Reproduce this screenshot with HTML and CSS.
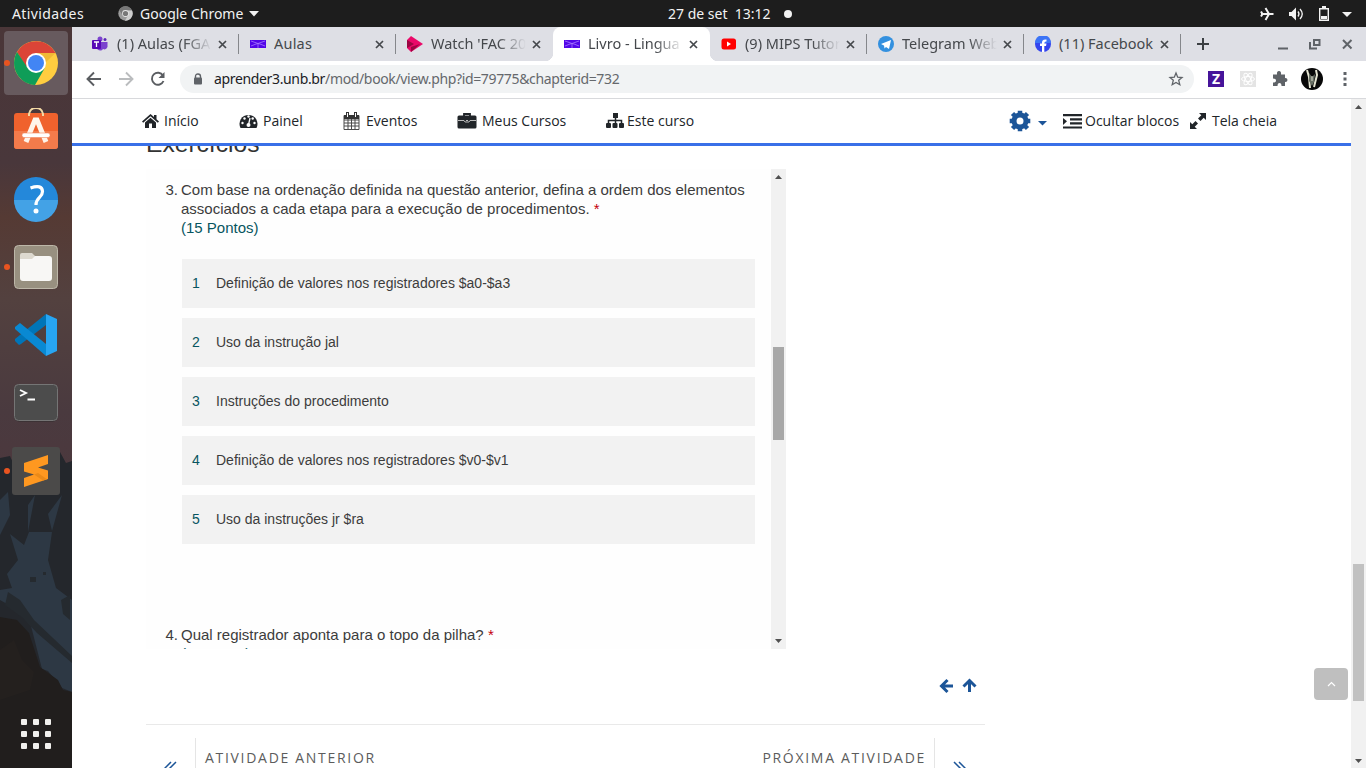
FILE: index.html
```html
<!DOCTYPE html>
<html lang="pt-BR">
<head>
<meta charset="utf-8">
<title>Livro - Linguagem</title>
<link rel="stylesheet" href="styles.css">
</head>
<body>
<header class="topbar">
  <span class="activities">Atividades</span>
  <svg class="app-icon" width="15" height="15" viewBox="0 0 15 15"><circle cx="7.5" cy="7.5" r="7.2" fill="#9b9b9b"/><path d="M1.2 4A7.2 7.2 0 0 1 14 4.500H7.500L4.500 9Z" fill="#777"/><path d="M14 4.500A7.200 7.200 0 0 1 7 14.700L10 9.500 9.500 4.500Z" fill="#ccc"/><circle cx="7.500" cy="7.500" r="3.400" fill="#e5e5e5"/><circle cx="7.500" cy="7.500" r="2.600" fill="#777"/></svg>
  <span class="app-name">Google Chrome</span>
  <svg class="caret" width="10" height="6"><path d="M0 0H10L5 5.500Z" fill="#f2f2f2"/></svg>
  <span class="clock">27 de set&nbsp; 13:12</span>
  <span class="dot"></span>
  <svg class="tray" width="94" height="18" viewBox="0 0 94 18" fill="none" stroke="#f2f2f2"><path d="M2 9H14.500M6.500 3 10 9 6.500 15M2 6.500 3.500 9 2 11.500" stroke-width="2"/><path d="M30 7H32.500L37 2.500V15.500L32.500 11H30Z" fill="#f2f2f2" stroke="none"/><path d="M39 6.500Q41 9 39 11.500M41 4Q45.500 9 41 14" stroke-width="1.300"/><path d="M60.700 3.700H69.300V15.300H60.700Z" stroke-width="1.400"/><path d="M63 1H67V3H63ZM62 11H68V14H62Z" fill="#f2f2f2" stroke="none"/><path d="M83 7H93L88 12Z" fill="#f2f2f2" stroke="none"/></svg>
</header>
<div class="desktop">
<aside class="dock">
  <svg class="wall" width="72" height="741" viewBox="0 27 72 741" preserveAspectRatio="none">
    <defs><linearGradient id="sky" x1="0" y1="0" x2="0" y2="1"><stop offset="0" stop-color="#4a3638"/><stop offset=".3" stop-color="#49373b"/><stop offset=".42" stop-color="#553a34"/><stop offset=".6" stop-color="#53413f"/><stop offset=".85" stop-color="#4a3a3f"/><stop offset="1" stop-color="#4c383d"/></linearGradient></defs>
    <path d="M0 27H72V480H0Z" fill="url(#sky)"/>
    <path d="M0 458 10 456 14 465 28 458 42 462 60 452 66 463 72 461V768H0Z" fill="#24272c"/>
    <path d="M0 500 8 492 10 515 0 535ZM28 505 35 495 28 532ZM48 514 62 495 52 531ZM10 534 24 545 29 532 52 532 48 560 56 588 72 600V692L62 688 48 671 42 669 31 626 16 609 0 600 0 590 12 588 7 574 18 560Z" fill="#2d3844"/>
    <path d="M8 592 20 600 34 620 72 656V663L37 633 23 618 5 605ZM61 600 70 595V620L63 614ZM30 577H36V582H30ZM43 572H46V575H43Z" fill="#252a2f"/>
    <path d="M0 617 17 620 29 633 40 667 58 680 63 690 72 692V768H0Z" fill="#211e1d"/>
    <path d="M0 650 14 640 22 660 34 672 30 690 0 700Z" fill="#272120" opacity=".6"/>
  </svg>
  <div class="item current running"><svg width="46" height="46" viewBox="0 0 46 46"><circle cx="23" cy="23" r="22" fill="#ffcd40"/><path d="M4 12A22 22 0 0 1 42.500 13H23L13.500 28Z" fill="#db4437"/><path d="M4 12A22 22 0 0 0 22 45L31.500 28.500 14 27Z" fill="#0f9d58"/><path d="M23 13H42.500L33 22Z" fill="#e2a52c" opacity=".5"/><circle cx="23" cy="23" r="10" fill="#fff"/><circle cx="23" cy="23" r="8" fill="#4285f4"/></svg></div>
  <div class="item"><svg width="46" height="46" viewBox="0 0 46 46"><rect x="1" y="5" width="44" height="36" rx="3" fill="#f0622d"/><path d="M1 23H45V38A3 3 0 0 1 42 41H4A3 3 0 0 1 1 38Z" fill="#f37b4b"/><path d="M16 8V6Q17 0 23 0 29 0 30 6V8" fill="none" stroke="#f3d9a4" stroke-width="2"/><path d="M13 34 22 12H24L33 34" fill="none" stroke="#fff4ea" stroke-width="5"/><rect x="9" y="25" width="28" height="4.500" rx="2" fill="#fff" stroke="#f0865c" stroke-width=".6"/></svg></div>
  <div class="item"><svg width="46" height="46" viewBox="0 0 46 46"><circle cx="23" cy="23" r="22" fill="#2488da"/><path d="M1 24H45A22 22 0 0 1 1 24Z" fill="#43a2e6"/><path d="M17.500 12Q29 8 29.500 15.500C29.500 22 23 21 23 29" fill="none" stroke="#fff" stroke-width="3.200"/><circle cx="23" cy="35" r="2.500" fill="#fff"/></svg></div>
  <div class="item running"><svg width="46" height="46" viewBox="0 0 46 46"><rect x="1.500" y="1.500" width="43" height="43" rx="4" fill="#989080" stroke="#bdb7a9"/><path d="M7 15V11Q7 9 9 9H19L22 12H36V17Z" fill="#ddd9cf"/><path d="M7 15H19L22 12H36Q39 12 39 15V34Q39 37 36 37H10Q7 37 7 34Z" fill="#f8f7f5"/></svg></div>
  <div class="item"><svg width="46" height="46" viewBox="0 0 46 46"><path d="M33 2V13L8 32 6 33 2 29V27Z" fill="#0075b8"/><path d="M33 44V32L7 11 2 15V17Z" fill="#0989d3"/><path d="M33 2 44 7V39L33 44Z" fill="#27a5f2"/></svg></div>
  <div class="item"><svg width="46" height="46" viewBox="0 0 46 46"><rect x="1" y="4.500" width="44" height="37" rx="5" fill="#2f2b2c"/><rect x="1.500" y="4.500" width="43" height="36" rx="4" fill="#4c4c4c" stroke="#757575"/><path d="M7 10 13 13 7 16M14.500 19.500H22" fill="none" stroke="#fff" stroke-width="1.900"/></svg></div>
  <div class="item running"><svg width="48" height="48" viewBox="0 0 48 48"><rect width="48" height="48" rx="3" fill="#4b4a49"/><path d="M12 16 36 8V17L26 20.500 36 23.500V32L12 40V31L22 27.500 12 24.500Z" fill="#ff9820"/><path d="M22 27.500 26 26 35 32.300 31 33.500Z" fill="#ec8a18"/></svg></div>
  <div class="apps"><i></i><i></i><i></i><i></i><i></i><i></i><i></i><i></i><i></i></div>
</aside>
<main class="browser">
  <nav class="tabs">
    <div class="tab"><svg class="fav" width="16" height="16" viewBox="0 0 16 16"><circle cx="8" cy="3" r="2.500" fill="#7b42ce"/><circle cx="13" cy="3.500" r="1.500" fill="#5b24b8"/><path d="M5 6H15.500V11Q14 14.500 11 13 9 16 5 13Z" fill="#7b42ce"/><rect y="4" width="9" height="9" rx="1" fill="#5709b6"/><path d="M2 6H7M4.500 6V11" stroke="#fff" stroke-width="1.300"/></svg><span class="title">(1) Aulas (FGA</span><svg class="x" width="9" height="9"><path d="M1 1 8 8M8 1 1 8"/></svg></div>
    <div class="tab"><svg class="fav" width="16" height="16" viewBox="0 0 16 16"><path d="M0 4H16V12H0Z" fill="#5206e8"/><path d="M1 5 8 7.500 15 5M1 10 6 8 8 7.500 10 8 15 10M8 7V12" fill="none" stroke="#a77aff" stroke-width=".8"/></svg><span class="title t2">Aulas</span><svg class="x" width="9" height="9"><path d="M1 1 8 8M8 1 1 8"/></svg></div>
    <div class="tab nosep"><svg class="fav" width="16" height="16" viewBox="0 0 16 16"><path d="M0 4 4 0 16 8 4 16 0 12Z" fill="#ea0969"/><path d="M0 4 7 8 0 12ZM4 11 13 8 4 16Z" fill="#9a0742"/></svg><span class="title t3">Watch 'FAC 2020</span><svg class="x" width="9" height="9"><path d="M1 1 8 8M8 1 1 8"/></svg></div>
    <div class="tab active nosep"><svg class="fav" width="16" height="16" viewBox="0 0 16 16"><path d="M0 4H16V12H0Z" fill="#5206e8"/><path d="M1 5 8 7.500 15 5M1 10 6 8 8 7.500 10 8 15 10M8 7V12" fill="none" stroke="#a77aff" stroke-width=".8"/></svg><span class="title t4">Livro - Lingua</span><svg class="x" width="9" height="9"><path d="M1 1 8 8M8 1 1 8"/></svg></div>
    <div class="tab"><svg class="fav" width="16" height="16" viewBox="0 0 16 16"><rect x=".5" y="2.500" width="14.500" height="11" rx="2.500" fill="#f00"/><path d="M6 5.500 10 8 6 10.500Z" fill="#fff"/></svg><span class="title">(9) MIPS Tutor</span><svg class="x" width="9" height="9"><path d="M1 1 8 8M8 1 1 8"/></svg></div>
    <div class="tab"><svg class="fav" width="16" height="16" viewBox="0 0 16 16"><circle cx="8" cy="8" r="8" fill="#3390df"/><path d="M3 8 13 4 11 13 8 11 6.500 12.500 6 9.500Z" fill="#fff"/></svg><span class="title t6">Telegram Web</span><svg class="x" width="9" height="9"><path d="M1 1 8 8M8 1 1 8"/></svg></div>
    <div class="tab"><svg class="fav" width="16" height="16" viewBox="0 0 16 16"><circle cx="8" cy="8" r="8" fill="#3445ee"/><path d="M0 7A8 8 0 0 1 16 7Z" fill="#3c74f6"/><path d="M7 16V10H5V7.500H7Q6.500 3 11.500 3.500V5.500Q9.300 5.200 9.300 7.500H11.500L11 10H9.300V16Z" fill="#fff"/></svg><span class="title t7">(11) Facebook</span><svg class="x" width="9" height="9"><path d="M1 1 8 8M8 1 1 8"/></svg></div>
    <svg class="plus" width="12" height="12"><path d="M6 0V12M0 6H12" stroke="#3c4043" stroke-width="2"/></svg>
    <svg class="wins" width="78" height="14" viewBox="0 0 78 14" fill="none" stroke="#5f6368" stroke-width="2"><path d="M1 11.500H11M38.500 3H42.500V8H37V3H39M33 5V11.500H40"/><path d="M66 3 74.500 11.500M74.500 3 66 11.500"/></svg>
  </nav>
  <div class="toolbar">
    <svg width="88" height="20" viewBox="0 0 88 20" fill="none" stroke-width="1.900"><path d="M17 10H4M10 3.500 3.500 10 10 16.500" stroke="#5a5d61"/><path d="M35 10H48M42 3.500 48.500 10 42 16.500" stroke="#babcbe"/><path d="M79 6.500A6 6 0 1 0 79.500 12" stroke="#5a5d61"/><path d="M80.500 3V9H74.500Z" fill="#5a5d61"/></svg>
    <div class="omnibox"><svg class="lock" width="10" height="12"><path d="M2.500 5V3.500Q2.500 1 5 1T7.500 3.500V5" fill="none" stroke="#5f6368" stroke-width="1.400"/><rect x="1" y="4.500" width="8" height="7" rx="1" fill="#5f6368"/></svg><span class="url"><b>aprender3.unb.br</b>/mod/book/view.php?id=79775&amp;chapterid=732</span><svg class="star" width="16" height="16" viewBox="0 0 16 16"><path d="M8 2 9.700 6.200 14 6.500 10.700 9.300 11.800 13.700 8 11.400 4.200 13.700 5.300 9.300 2 6.500 6.300 6.200Z" fill="none" stroke="#5f6368" stroke-width="1.300"/></svg></div>
    <span class="zed">Z</span>
    <svg class="react" width="16" height="16" viewBox="0 0 16 16"><rect width="16" height="16" fill="#e4e4e4"/><g fill="none" stroke="#fff"><ellipse cx="8" cy="8" rx="6.500" ry="2.500"/><ellipse cx="8" cy="8" rx="6.500" ry="2.500" transform="rotate(60 8 8)"/><ellipse cx="8" cy="8" rx="6.500" ry="2.500" transform="rotate(120 8 8)"/></g></svg>
    <svg class="puzzle" width="16" height="16" viewBox="0 0 16 16"><path d="M1 3.500H5Q4.500 0 7 0T9 3.500H13V7Q15.500 6.800 15.500 9T13 11V15H9.500Q9.500 12 7.500 12T5.500 15H1V11.500Q4 11.500 4 9.500T1 7.500Z" fill="#5f6368"/></svg>
    <svg class="avatar" width="22" height="22" viewBox="0 0 22 22"><circle cx="11" cy="11" r="11" fill="#080808"/><path d="M6 2 8 9 9 20M15 2 16 7 13 19" fill="none" stroke="#e5e5d2" stroke-width="2"/><path d="M8 5 11 9 14 6 13 14 11 18 8 13Z" fill="#687064"/><path d="M11 8V13" stroke="#dcdccb"/></svg>
    <svg class="dots" width="4" height="14"><path d="M2 0V14" stroke="#5f6368" stroke-width="3" stroke-dasharray="3 2.500"/></svg>
  </div>
  <div class="viewport">
    <div class="site">
      <nav class="menu">
        <a class="m1"><svg width="17" height="16" viewBox="0 0 17 16" fill="#212529"><path d="M8.500 1 0 8.500 1.200 9.800 8.500 3.300 15.800 9.800 17 8.500 14.500 6.200V2H12V4Z"/><path d="M3 9.500 8.500 4.800 14 9.500V15H10V10.500H7V15H3Z"/></svg>Início</a>
        <a class="m2"><svg width="19" height="16" viewBox="0 0 19 16"><path d="M1.500 15A9 9 0 1 1 17.500 15Z" fill="#212529"/><g fill="#fff"><circle cx="3.500" cy="10" r="1.200"/><circle cx="5.500" cy="5.500" r="1.200"/><circle cx="9.500" cy="3.500" r="1.200"/><circle cx="15.500" cy="10" r="1.200"/><circle cx="13.700" cy="5.500" r="1.200"/></g><path d="M11 5 9.500 12" stroke="#fff" stroke-width="1.300"/><circle cx="9.500" cy="12" r="2" fill="#fff"/></svg>Painel</a>
        <a class="m3"><svg width="17" height="18" viewBox="0 0 17 18"><path d="M1 3.500H16V17.500H1ZM1 8H16M1 11H16M1 14H16M5 7V17M8.500 7V17M12 7V17" fill="none" stroke="#4a4a4a"/><path d="M1 3H16V7H1ZM3 0H6V6H3ZM11 0H14V6H11Z" fill="#333"/><path d="M4.500 1V5M12.500 1V5" stroke="#fff"/></svg>Eventos</a>
        <a class="m4"><svg width="20" height="16" viewBox="0 0 20 16"><path d="M7 3V1H13V3" fill="none" stroke="#212529" stroke-width="1.800"/><rect x=".5" y="2.500" width="19" height="13" rx="1.500" fill="#212529"/><path d="M1 7.500H7L8 9H12L13 7.500H19M9 7.500H11" fill="none" stroke="#bbb"/></svg>Meus Cursos</a>
        <a class="m5"><svg width="19" height="16" viewBox="0 0 19 16" fill="#212529"><rect x="7" y="0" width="5" height="5"/><rect y="10" width="5" height="5" rx="1"/><rect x="6.500" y="10" width="5" height="5" rx="1"/><rect x="13" y="10" width="5" height="5" rx="1"/><path d="M9.500 4V11M2.500 11V7.500H15.500V11" fill="none" stroke="#212529" stroke-width="1.500"/></svg>Este curso</a>
        <a class="m6"><svg width="22" height="22" viewBox="-11 -11 22 22"><circle r="6" fill="none" stroke="#1c5598" stroke-width="5"/><g stroke="#1c5598" stroke-width="4.500"><path d="M0-10.300V-6M0 6V10.300M-10.300 0H-6M6 0H10.300M-7.500-7.500-5-5M5 5 7.500 7.500M-7.500 7.500-5 5M5-5 7.500-7.500"/></g></svg><svg class="gearcaret" width="9" height="5"><path d="M0 0H9L4.500 4.500Z" fill="#1c5598"/></svg></a>
        <a class="m7"><svg width="19" height="15" viewBox="0 0 19 15"><path d="M0 1.200H19M7 5.300H19M7 9.300H19M0 13.500H19" stroke="#212529" stroke-width="2.200"/><path d="M0 4 4 7.300 0 11Z" fill="#212529"/></svg>Ocultar blocos</a>
        <a class="m8"><svg width="16" height="16" viewBox="0 0 16 16" fill="#212529"><path d="M9 0H16V7L13.700 4.700 10.500 8 8 5.500 11.300 2.300ZM7 16H0V9L2.300 11.300 5.500 8 8 10.500 4.700 13.700Z"/></svg>Tela cheia</a>
      </nav>
      <div class="course">
        <div class="headclip"><h2>Exercícios</h2></div>
        <div class="frame">
          <div class="form">
            <div class="q"><span class="n">3.</span><p>Com base na ordenação definida na questão anterior, defina a ordem dos elementos associados a cada etapa para a execução de procedimentos. <em>*</em><br><span class="pts">(15 Pontos)</span></p></div>
            <ol class="rank"><li><span>1</span>Definição de valores nos registradores $a0-$a3</li><li><span>2</span>Uso da instrução jal</li><li><span>3</span>Instruções do procedimento</li><li><span>4</span>Definição de valores nos registradores $v0-$v1</li><li><span>5</span>Uso da instruções jr $ra</li></ol>
            <div class="q"><span class="n">4.</span><p>Qual registrador aponta para o topo da pilha? <em>*</em><br><span class="pts">(5 Pontos)</span></p></div>
          </div>
          <div class="bar inner"><svg width="7" height="4"><path d="M0 4H7L3.500 0Z" fill="#505050"/></svg><i></i><svg class="down" width="7" height="4"><path d="M0 0H7L3.500 4Z" fill="#505050"/></svg></div>
        </div>
        <div class="arrows"><svg width="38" height="16" viewBox="0 0 38 16" fill="none" stroke="#1c5598" stroke-width="3"><path d="M14 8H3M8.500 2 2.500 8 8.500 14M30.500 14V3M24.500 8.500 30.500 2.500 36.500 8.500"/></svg></div>
        <div class="pager"><div class="chev"><svg width="14" height="14" viewBox="0 0 14 14"><path d="M7 1 1 7 7 13M12 1 6 7 12 13"/></svg></div><span class="prev">ATIVIDADE ANTERIOR</span><span class="next">PRÓXIMA ATIVIDADE</span><div class="chev right"><svg width="14" height="14" viewBox="0 0 14 14"><path d="M2 1 8 7 2 13M7 1 13 7 7 13"/></svg></div></div>
      </div>
      <div class="totop"><svg width="9" height="6"><path d="M1 5 4.500 1.500 8 5" fill="none" stroke="#fff" stroke-width="1.200"/></svg></div>
    </div>
    <div class="bar outer"><svg width="7" height="4"><path d="M0 4H7L3.500 0Z" fill="#505050"/></svg><i></i><svg class="down" width="7" height="4"><path d="M0 0H7L3.500 4Z" fill="#505050"/></svg></div>
  </div>
</main>
</div>
</body>
</html>
```
FILE: styles.css
```css
* { box-sizing: border-box; }
body { margin: 0; width: 1366px; height: 768px; overflow: hidden; background: #fff; font-family: "Open Sans", "Noto Sans", sans-serif; }
svg { flex: none; display: block; }
.topbar { height: 27px; background: #1d1d1d; color: #f2f2f2; display: flex; align-items: center; font: 14px/27px "Noto Sans", sans-serif; white-space: nowrap; }
.activities { margin-left: 12px; width: 106px; letter-spacing: .4px; }
.app-icon { margin-right: 7px; }
.app-name { width: 104px; }
.caret { margin-left: 5px; }
.clock { margin-left: 409px; width: 104px; letter-spacing: 0; }
.dot { width: 8px; height: 8px; border-radius: 50%; background: #f2f2f2; margin-left: 12px; }
.tray { margin-left: auto; margin-right: 13px; }
.desktop { display: flex; height: 741px; }
.dock { width: 72px; position: relative; display: flex; flex-direction: column; align-items: center; gap: 4px; padding-top: 4px; }
.wall { position: absolute; left: 0; top: 0; }
.item { position: relative; width: 64px; height: 64px; border-radius: 4px; display: flex; align-items: center; justify-content: center; flex: none; }
.current { background: #675a5e; }
.running::before { content: ""; position: absolute; left: 0; top: 29px; width: 6px; height: 6px; border-radius: 50%; background: #e95420; }
.apps { position: relative; display: grid; grid-template-columns: repeat(3, 6px); grid-auto-rows: 6px; gap: 6px; margin-top: 212px; }
.apps i { width: 6px; height: 6px; border-radius: 1px; background: #f1f0ed; }
.browser { width: 1294px; display: flex; flex-direction: column; }
.tabs { height: 34px; background: #dedfe5; display: flex; align-items: center; padding-left: 10px; }
.tab { width: 157px; height: 34px; flex: none; display: flex; align-items: center; padding-left: 10px; position: relative; }
.tab:not(.nosep)::after { content: ""; position: absolute; right: 0; top: 7px; width: 1px; height: 20px; background: #85878b; }
.tab.active { background: #fff; border-radius: 8px 8px 0 0; }
.active::before, .active::after { content: ""; position: absolute; bottom: 0; width: 8px; height: 8px; }
.active::before { left: -8px; background: radial-gradient(circle at 0 0, transparent 8px, #fff 8.500px); }
.tab.active::after { right: -8px; background: radial-gradient(circle at 100% 0, transparent 8px, #fff 8.500px); }
.fav { position: relative; left: 1px; }
.tab:first-child .fav { left: 0; }
.title { margin-left: 9px; width: 95px; overflow: hidden; white-space: nowrap; padding-bottom: 2px; font: 14.500px/24px "Noto Sans", sans-serif; color: #45484c; -webkit-mask-image: linear-gradient(90deg, #000 70%, transparent); mask-image: linear-gradient(90deg, #000 70%, transparent); }
.t2, .t7 { -webkit-mask-image: none; mask-image: none; }
.t2 { letter-spacing: .2px; }
.t7 { letter-spacing: 0; }
.x { margin-left: 6px; fill: none; stroke: #45484c; stroke-width: 1.700; }
.plus { margin-left: 16px; }
.wins { margin-left: 68px; }
.toolbar { height: 38px; border-bottom: 1px solid #d8d9dc; display: flex; align-items: center; padding: 0 0 2px 12px; }
.omnibox { margin-left: 8px; width: 1014px; height: 28px; border-radius: 14px; background: #f1f3f4; display: flex; align-items: center; padding: 0 10px 0 13px; }
.url { margin-left: 11px; font: 14px/28px "Noto Sans", sans-serif; color: #65686c; letter-spacing: -.35px; }
.url b { font-weight: 400; color: #202124; }
.star { margin-left: auto; }
.zed { width: 16px; height: 16px; margin-left: 14px; background: #46149a; color: #fff; font: bold 14px/16px "Noto Sans", sans-serif; text-align: center; }
.react { margin-left: 16px; }
.puzzle { margin-left: 16px; }
.avatar { margin-left: 13px; }
.dots { margin-left: 20px; }
.viewport { flex: 1; display: flex; min-height: 0; }
.site { width: 1279px; height: 669px; overflow: hidden; position: relative; }
.menu { height: 47px; border-bottom: 3px solid #3970e8; display: flex; align-items: center; font: 14px/20px "Open Sans", sans-serif; color: #212529; white-space: nowrap; padding-left: 70px; }
.menu a { display: flex; align-items: center; height: 44px; flex: none; }
.m1 { width: 97px; } .m1 svg { margin-right: 5px; }
.m2 { width: 104px; } .m2 svg { margin-right: 5px; }
.m3 { width: 114px; } .m3 svg { margin-right: 6px; }
.m4 { width: 149px; } .m4 svg { margin-right: 5px; }
.m5 { width: 403px; } .m5 svg { margin-right: 2px; }
.m6 { width: 54px; }
.gearcaret { margin: 4px 0 0 7px; }
.m7 { width: 127px; } .m7 svg { margin-right: 3px; }
.m8 svg { margin-right: 6px; }
.course { margin-left: 74px; width: 839px; }
.headclip { height: 23px; overflow: hidden; }
h2 { margin: -18px 0 0; font: 24.600px/32px "Liberation Sans", Arial, sans-serif; color: #333; }
.frame { width: 640px; height: 480px; display: flex; overflow: hidden; background: #fefefe; }
.form { width: 625px; padding: 11px 16px 0 19.500px; font: 15px/19px "Liberation Sans", Arial, sans-serif; color: #3c3c3c; }
.q { display: flex; }
.n { width: 15.500px; flex: none; }
.q p { margin: 0; width: 574px; }
.q em { font-style: normal; color: #c4000c; }
.pts { color: #075560; }
.rank { list-style: none; margin: 22px 0 81px 16.500px; padding: 0; display: grid; gap: 10px; font-size: 14px; }
.rank li { height: 49px; background: #f2f2f2; line-height: 49px; width: 573px; padding-left: 10px; }
.rank span { display: inline-block; width: 24px; color: #075560; }
.bar { width: 15px; background: #f1f1f1; display: flex; flex-direction: column; align-items: center; padding: 6px 0 5px; }
.bar i { width: 11px; background: #c1c1c1; }
.inner i { background: #a8a8a8; height: 93px; margin-top: 168px; }
.outer i { height: 137px; margin-top: 455px; }
.down { margin-top: auto; }
.inner .down { position: relative; top: -1px; }
.arrows { height: 75px; padding-top: 29px; display: flex; justify-content: flex-end; padding-right: 8px; }
.pager { height: 80px; border-top: 1px solid #e9e9e9; padding-top: 13px; display: flex; font: 14px/40px "Open Sans", sans-serif; letter-spacing: 1.700px; color: #5c5c5c; }
.chev { width: 50px; height: 70px; border-right: 1px solid #e5e5e5; padding: 23px 0 0 18px; }
.chev svg { fill: none; stroke: #1c5598; stroke-width: 1.500; }
.right { border-right: 0; border-left: 1px solid #e5e5e5; width: 51px; padding-left: 17px; }
.prev { margin-left: 9px; }
.next { margin-left: auto; margin-right: 8px; }
.totop { position: absolute; right: 3px; top: 569px; width: 34px; height: 32px; border-radius: 4px; background: #bfbfbf; display: flex; align-items: center; justify-content: center; }
```
